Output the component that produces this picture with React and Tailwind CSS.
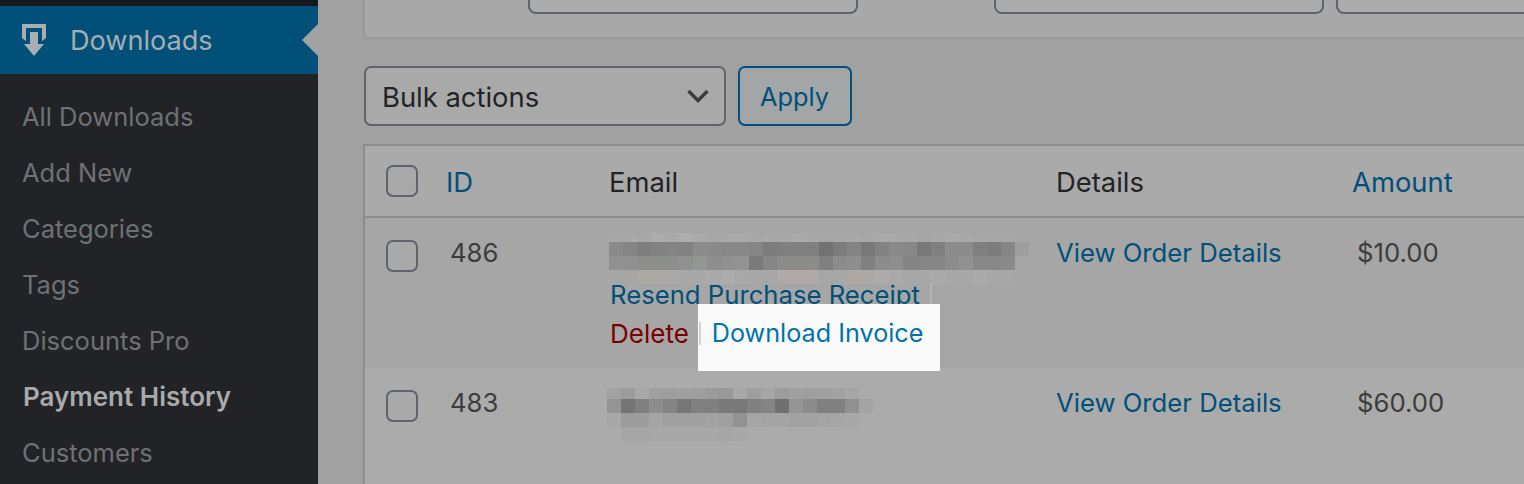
const menu = ['All Downloads', 'Add New', 'Categories', 'Tags', 'Discounts Pro', 'Payment History', 'Customers'];

const blurOne = [
  { h: 9, cells: ['#a8a8a8', '#a9a9a9', '#a8a8a8', '#adadad', '#aaaaaa', '#aeaeae', '#aaaaaa', '#a8a8a8', '#a9a9a9', '#aaaaaa', '#a8a8a8', '#a9a9a9', '#a8a8a8', '#aaaaaa', '#a8a8a8', '#a7a7a7', '#a9a9a9', '#a9a9a9', '#a8a8a8', '#aaaaaa', '#a9a9a9', '#a8a8a8', '#a6a6a6', '#a8a8a8', '#aaaaaa', '#a9a9a9', '#a8a8a8', '#a7a7a7', '#a8a8a8'] },
  { h: 14, cells: ['#8a8a8a', '#858585', '#7f7f7f', '#828282', '#848484', '#828282', '#8c8c8c', '#8a8a8a', '#888888', '#888888', '#868686', '#7c7c7c', '#808080', '#808080', '#808080', '#727272', '#7c7c7c', '#848484', '#787878', '#828282', '#8a8a8a', '#888888', '#787878', '#808080', '#8c8c8c', '#8c8c8c', '#808080', '#7c7c7c', '#868686', '#9e9e9e'] },
  { h: 14, cells: ['#909090', '#909090', '#8e8e8e', '#8c8f8c', '#8c8f8c', '#909090', '#949694', '#8e8e8e', '#909090', '#929292', '#7a7a7a', '#868686', '#8a8c8a', '#8a8c8a', '#8c8c8c', '#808080', '#8c8c8c', '#8e8e8e', '#808080', '#8c8c8c', '#8e8e8e', '#848484', '#868686', '#868686', '#8c8c8c', '#909090', '#888888', '#888888', '#8a8a8a'] },
  { h: 14, cells: ['#a6a6a6', '#a6a5a4', '#aca8a4', '#aca8a4', '#aba9a7', '#a8a8a8', '#a6a8aa', '#aba9a9', '#acacac', '#a9a9a9', '#a8a8a8', '#a8a8a8', '#b0a9a8', '#b0a9a8', '#b0a9a8', '#a6a8a8', '#a8a8a8', '#aea8a4', '#aea8a4', '#acacac', '#aaaaaa', '#a8a8a8', '#a8a8a8', '#aaaaaa', '#a8a8a8', '#a8a8a8', '#aaaaaa', '#a8a8a8', '#a8a8a8'] },
];

const blurTwo = [
  { h: 11, cells: ['#a2a2a2', '#9c9c9c', '#a8a8a8', '#a0a0a0', '#9e9e9e', '#a0a0a0', '#9e9e9e', '#9a9a9a', '#989898', '#a8a8a8', '#9e9e9e', '#a6a6a6', '#9c9c9c', '#a0a0a0', '#9e9e9e', '#a0a0a0', '#a2a2a2', '#a6a6a6', '#ababab'] },
  { h: 14, cells: ['#949494', '#747474', '#808080', '#8c8c8c', '#848484', '#767676', '#808080', '#808080', '#787878', '#787878', '#808080', '#848484', '#707070', '#949494', '#8c8c8c', '#808080', '#808080', '#909090', '#a4a4a4'] },
  { h: 14, cells: ['#a8a8a8', '#9c9c9c', '#9c9c9c', '#a4a4a4', '#a0a0a0', '#a0a0a0', '#a0a0a0', '#a2a2a2', '#a0a0a0', '#929292', '#a6a6a6', '#a4a4a4', '#a4a4a4', '#a2a2a2', '#a2a2a2', '#a4a4a4', '#a6a6a6', '#a8a8a8', '#ababab'] },
  { h: 14, cells: ['#ababab', '#a6a6a6', '#a6a6a6', '#a8a8a8', '#a8a8a8', '#a8a8a8', '#a8a8a8', '#a8a8a8', '#a6a6a6', '#a8a8a8', '#ababab', '#ababab', '#ababab', '#ababab', '#ababab', '#ababab', '#ababab', '#ababab', '#ababab'] },
];

function Mosaic({ rows, className }) {
  return (
    <div className={className}>
      {rows.map((row, i) => (
        <div key={i} className="flex">
          {row.cells.map((c, j) => (
            <div key={j} className="w-[14px] shrink-0" style={{ height: row.h, background: c }} />
          ))}
        </div>
      ))}
    </div>
  );
}

function Check() {
  return <div className="w-8 h-8 rounded-[7px] border-2 border-[#5f646c] bg-[#a9a9a9]" />;
}

export default function App() {
  return (
    <div className="flex w-[1524px] h-[484px] overflow-hidden bg-[#a1a1a1] text-[25.7px] font-['Inter','Liberation_Sans',sans-serif]">
      <aside className="w-[318px] shrink-0 bg-[#212327]">
        <div className="h-[6px] bg-[#16181d]" />
        <div className="relative flex items-center h-[68px] bg-[#00507a] text-[#a8adb1]">
          <svg viewBox="0 0 24 32" className="ml-[22px] w-6 h-8" fill="#a9aeb2">
            <path d="M0 0h24v14l-4 3V4H4v13L0 14z" />
            <path d="M8 8h8v12h6L12 32 2 20h6z" />
          </svg>
          <span className="ml-[24px] mt-[2px] text-[27.1px] leading-none">Downloads</span>
          <div className="absolute right-0 top-[18px] w-0 h-0 border-y-[16px] border-y-transparent border-r-[16px] border-r-[#a1a1a1]" />
        </div>
        <ul className="pt-[15px] pl-[22px]">
          {menu.map((m) => (
            <li key={m} className={`h-[56px] leading-[56px] ${m === 'Payment History' ? 'pl-[1px] text-[26px] font-semibold text-[#a9aaab]' : 'text-[25.5px] text-[#6f7174]'}`}>
              {m}
            </li>
          ))}
        </ul>
      </aside>

      <main className="flex-1 pl-[45px] min-w-0">
        <div className="flex h-[39px] pl-[163px] border-l-2 border-b-2 border-[#979797] rounded-bl-[6px] bg-[#a8a8a8]">
          <div className="w-[330px] h-[14px] border-x-2 border-b-2 border-[#5f646c] rounded-b-[8px] bg-[#ababab]" />
          <div className="ml-[136px] w-[330px] h-[14px] border-x-2 border-b-2 border-[#5f646c] rounded-b-[8px] bg-[#ababab]" />
          <div className="ml-[12px] flex-1 h-[14px] border-l-2 border-b-2 border-[#5f646c] rounded-bl-[8px] bg-[#ababab]" />
        </div>

        <div className="flex mt-[27px] ml-[1px] h-[60px]">
          <div className="flex items-center justify-between w-[362px] pl-[16px] pr-[15px] border-2 border-[#5f646c] rounded-[7px] bg-[#a9a9a9] text-[27.4px] text-[#212327]">
            <span className="pt-[3px]">Bulk actions</span>
            <svg viewBox="0 0 22 14" className="w-[22px] h-[14px]" fill="none" stroke="#3a3c3f" strokeWidth="3.4">
              <path d="M1.500 2l9.500 9.500L20.500 2" />
            </svg>
          </div>
          <div className="flex items-center justify-center ml-[12px] pt-[2px] pr-[1px] w-[114px] border-2 border-[#00507a] rounded-[7px] bg-[#a3a6a7] text-[25.3px] text-[#00507a]">
            Apply
          </div>
        </div>

        <div className="mt-[18px] border-l-2 border-t-2 border-[#8b8e91]">
          <div className="flex items-center h-[72px] border-b-2 border-[#8b8e91] bg-[#aaaaaa] text-[27.4px]">
            <div className="w-[67px] pl-[21px] shrink-0"><Check /></div>
            <div className="w-[177px] pl-[14px] pt-[3px] shrink-0 text-[#00507a]">ID</div>
            <div className="w-[447px] pt-[3px] shrink-0 text-[#212327]">Email</div>
            <div className="w-[296px] pt-[3px] shrink-0 text-[#212327]">Details</div>
            <div className="pt-[3px] text-[#00507a]">Amount</div>
          </div>

          <div className="flex h-[150px] bg-[#a6a6a6]">
            <div className="w-[67px] pl-[21px] pt-[22px] shrink-0"><Check /></div>
            <div className="w-[178px] pl-[18px] pt-[15px] shrink-0 leading-[40px] text-[#3c3c3c]">486</div>
            <div className="w-[446px] shrink-0 relative">
              <Mosaic rows={blurOne} className="mt-[15px] -ml-[1px]" />
              <div className="flex items-center h-[38px] mt-[-8px] text-[#00507a]">
                <span>Resend Purchase Receipt</span>
                <span className="ml-[10px] w-[2px] h-[24px] bg-[#b4b4b4]" />
              </div>
              <div className="flex items-center h-[38px] text-[26px] text-[#7a0000]">
                <span>Delete</span>
                <span className="relative ml-[23px] text-[25.2px] leading-[38px] text-[#0073aa]">
                  <span className="absolute -left-[14px] -right-[17px] -top-[10px] -bottom-[19px] bg-[#fafafa]" />
                  <span className="absolute -left-[13px] top-[8px] w-[2px] h-[23px] bg-[#d2d2d2]" />
                  <span className="relative">Download Invoice</span>
                </span>
              </div>
            </div>
            <div className="w-[296px] pt-[15px] shrink-0 leading-[40px] text-[#00507a]">View Order Details</div>
            <div className="pl-[5px] pt-[15px] leading-[40px] text-[#3c3c3c]">$10.00</div>
          </div>

          <div className="flex h-[120px] bg-[#ababab]">
            <div className="w-[67px] pl-[21px] pt-[22px] shrink-0"><Check /></div>
            <div className="w-[178px] pl-[18px] pt-[15px] shrink-0 leading-[40px] text-[#3c3c3c]">483</div>
            <div className="w-[446px] shrink-0">
              <Mosaic rows={blurTwo} className="mt-[20px] -ml-[3px]" />
            </div>
            <div className="w-[296px] pt-[15px] shrink-0 leading-[40px] text-[#00507a]">View Order Details</div>
            <div className="pl-[5px] pt-[15px] leading-[40px] text-[#3c3c3c]">$60.00</div>
          </div>
        </div>
      </main>
    </div>
  );
}
